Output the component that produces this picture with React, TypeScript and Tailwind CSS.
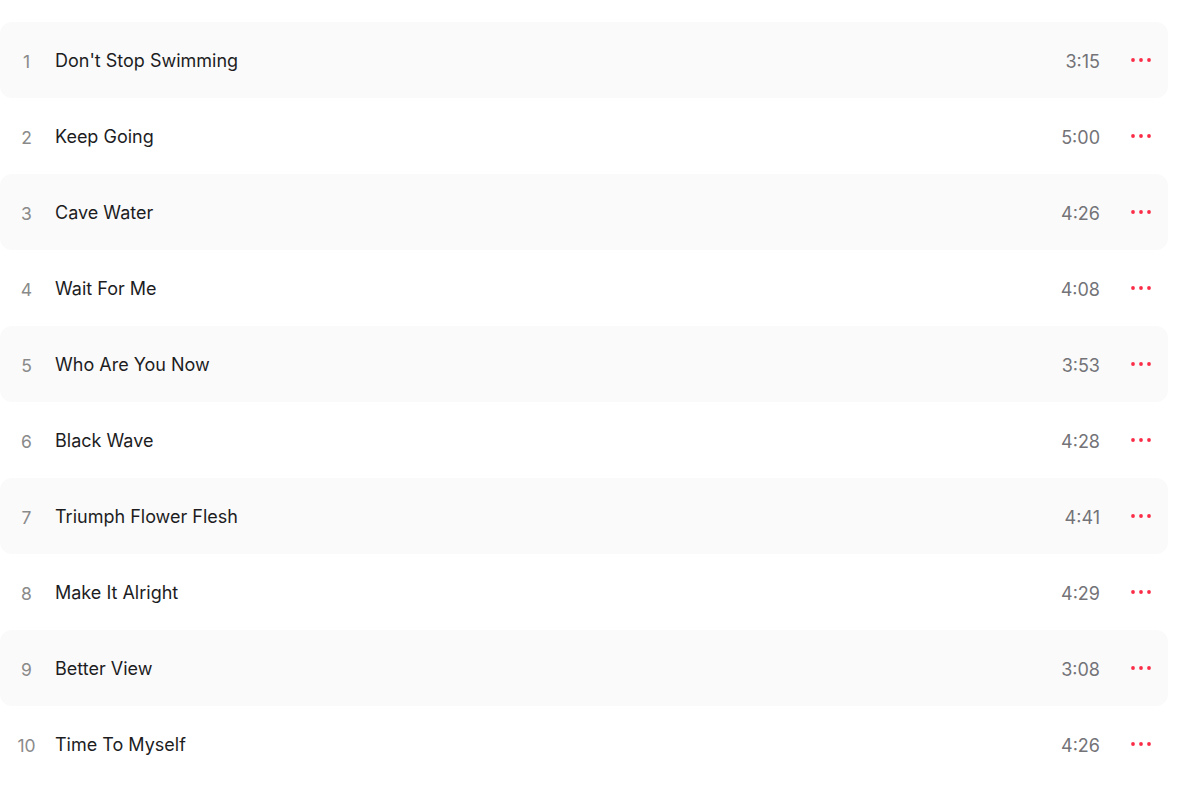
const tracks = [
  { n: 1, title: "Don't Stop Swimming", time: "3:15" },
  { n: 2, title: "Keep Going", time: "5:00" },
  { n: 3, title: "Cave Water", time: "4:26" },
  { n: 4, title: "Wait For Me", time: "4:08" },
  { n: 5, title: "Who Are You Now", time: "3:53" },
  { n: 6, title: "Black Wave", time: "4:28" },
  { n: 7, title: "Triumph Flower Flesh", time: "4:41" },
  { n: 8, title: "Make It Alright", time: "4:29" },
  { n: 9, title: "Better View", time: "3:08" },
  { n: 10, title: "Time To Myself", time: "4:26" },
];

const MoreDots = () => (
  <svg width="20" height="6" viewBox="0 0 20 6" className="text-[#fa2d48]">
    <circle cx="2" cy="3" r="1.9" fill="currentColor" />
    <circle cx="10" cy="3" r="1.9" fill="currentColor" />
    <circle cx="18" cy="3" r="1.9" fill="currentColor" />
  </svg>
);

const TrackRow = ({ track, shaded }: { track: (typeof tracks)[number]; shaded: boolean }) => (
  <div
    className={`flex items-center h-[76px] rounded-xl ${shaded ? "bg-[#fafafa]" : ""}`}
  >
    {/* Number */}
    <div className="w-[53px] pt-[5px] text-center text-[17.5px] text-[#8a8a8a]">{track.n}</div>

    {/* Title */}
    <div className="flex-1 ml-[2px] text-[18px] text-[#1d1d1f]">{track.title}</div>

    {/* Duration */}
    <div className="pt-[3px] text-[18px] text-[#737378] text-right">{track.time}</div>

    {/* More */}
    <div className="ml-[31px] mr-[17px] flex items-center">
      <MoreDots />
    </div>
  </div>
);

export default function App() {
  return (
    <div
      className="w-[1200px] h-[803px] bg-white pt-[22px] pr-[32px]"
      style={{ fontFamily: "Inter, 'Noto Sans', sans-serif" }}
    >
      {tracks.map((t, i) => (
        <TrackRow key={t.n} track={t} shaded={i % 2 === 0} />
      ))}
    </div>
  );
}
